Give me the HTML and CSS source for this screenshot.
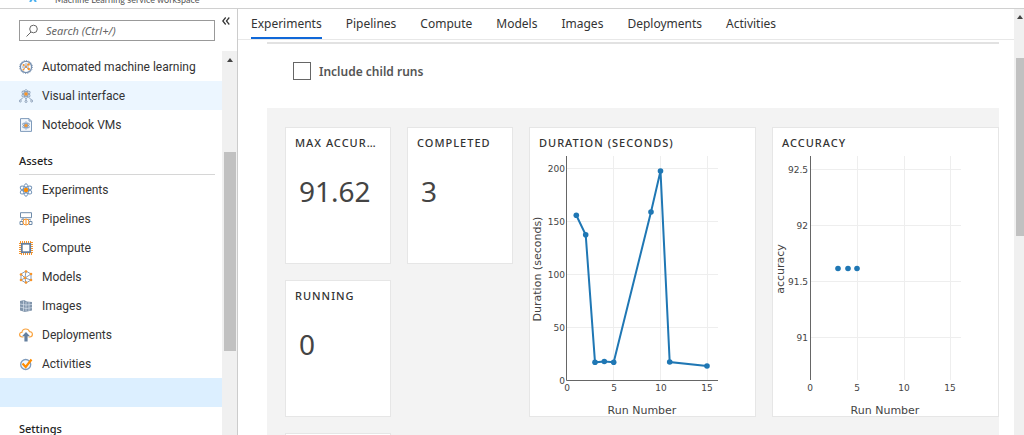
FILE: index.html
```html
<!DOCTYPE html>
<html lang="en">
<head>
<meta charset="utf-8">
<title>Machine Learning service workspace</title>
<link rel="stylesheet" href="styles.css">
</head>
<body>
<div class="app">
  <header class="topbar">
    <svg class="topbar-icon" width="8" height="8" viewBox="0 0 8 8" aria-hidden="true"><path d="M1 8L3 5M5 5L7 8" stroke="#4db2f0" stroke-width="2"/></svg>
    <span>Machine Learning service workspace</span>
  </header>
  <div class="body">
    <aside class="sidebar">
      <div class="sidebar-head">
        <label class="search">
          <svg width="14" height="14" viewBox="0 0 14 14" fill="none" stroke="#666" aria-hidden="true"><circle cx="8.5" cy="5" r="3.8"/><path d="M6 8L1.5 12.5"/></svg>
          <input type="text" placeholder="Search (Ctrl+/)" aria-label="Search">
        </label>
        <button class="collapse" aria-label="Collapse menu"><svg width="8" height="8" viewBox="0 0 8 8" fill="none" stroke="#333" stroke-width="1.2"><path d="M3.7 .5L.8 4l2.9 3.5M7.3 .5L4.4 4l2.9 3.5"/></svg></button>
      </div>
      <div class="sidebar-scroll">
        <nav class="menu">
          <a class="item" href="#"><svg viewBox="0 0 14 14" fill="none" stroke="#7891b0"><circle cx="7" cy="7" r="5.6" stroke-width="1.3"/><circle cx="7" cy="7" r="6.5" stroke-dasharray="1 1.5"/><path d="M3 7h7M4.500 4L10 10M10 3.500L4 10M7 3v3" stroke-width=".8"/><g fill="#f7942a" stroke="none"><circle cx="9.500" cy="4.500" r="1.300"/><circle cx="4.500" cy="5" r="1"/><circle cx="7" cy="7" r="1"/><circle cx="4.500" cy="9.500" r="1"/><circle cx="9.800" cy="9" r="1.200"/></g></svg>Automated machine learning</a>
          <a class="item hover" href="#"><svg viewBox="0 0 14 14" fill="none" stroke="#8ba0ba"><g stroke-width=".9"><ellipse cx="7" cy="5" rx="2" ry="4.500"/><ellipse cx="7" cy="5" rx="2" ry="4.500" transform="rotate(60 7 5)"/><ellipse cx="7" cy="5" rx="2" ry="4.500" transform="rotate(120 7 5)"/></g><path d="M4 8.500L1.500 11M10 8.500l2.500 2.500M7 9v3"/><g fill="#fff"><circle cx="1.300" cy="12" r="1"/><circle cx="7" cy="12.500" r="1"/><circle cx="12.700" cy="12" r="1"/></g><circle cx="7" cy="5" r="1.800" fill="#f7942a" stroke="none"/></svg>Visual interface</a>
          <a class="item" href="#"><svg viewBox="0 0 14 14" fill="none" stroke="#7f9bbb"><path d="M1.500 .6h8.500l2.500 2.500v10.300h-11z" fill="#f3f8fd"/><path d="M10 .6v2.500h2.500"/><g stroke-width=".8"><ellipse cx="7" cy="7.500" rx="1.500" ry="3.800"/><ellipse cx="7" cy="7.500" rx="1.500" ry="3.800" transform="rotate(60 7 7.500)"/><ellipse cx="7" cy="7.500" rx="1.500" ry="3.800" transform="rotate(120 7 7.500)"/></g><circle cx="7" cy="7.500" r="1.600" fill="#f7942a" stroke="none"/></svg>Notebook VMs</a>
          <h2 class="heading">Assets</h2>
          <a class="item" href="#"><svg viewBox="0 0 14 14" fill="none" stroke="#7595b8"><ellipse cx="7" cy="7" rx="2.500" ry="6.300"/><ellipse cx="7" cy="7" rx="2.500" ry="6.300" transform="rotate(60 7 7)"/><ellipse cx="7" cy="7" rx="2.500" ry="6.300" transform="rotate(120 7 7)"/><circle cx="7" cy="7" r="2.200" fill="#ff8c00" stroke="none"/></svg>Experiments</a>
          <a class="item" href="#"><svg viewBox="0 0 14 14" fill="none" stroke="#6f8cab"><path d="M1.500 .7h11v5h-11zM4 6v2M1 9.500h3v3H1zM10 9.500h3v3h-3z"/><path d="M2.500 8.500V7.500h9v1" stroke="#8ba0ba"/><circle cx="7" cy="10" r="3" stroke="#f7942a" fill="#fff"/><path d="M7 7v6" stroke="#f7942a"/></svg>Pipelines</a>
          <a class="item" href="#"><svg viewBox="0 0 14 14" fill="none"><rect x="1" y="1" width="12" height="12" stroke="#f7942a" stroke-width="2" stroke-dasharray="1 1"/><rect x="2.800" y="2.800" width="8.400" height="8.400" fill="#fff" stroke="#647f9e" stroke-width="1.800"/></svg>Compute</a>
          <a class="item" href="#"><svg viewBox="0 0 14 14" fill="none" stroke="#7891b0"><path d="M7 1l5 3v6l-5 3-5-3V4zM2 4l4 4 6-4M6 8l1 5M6 8l6 2M7 1L6 8l-4 2" stroke-width=".9"/><g fill="#f7942a" stroke="none"><circle cx="7" cy="1.500" r="1.300"/><circle cx="12" cy="4" r="1.300"/><circle cx="12" cy="10" r="1.300"/><circle cx="7" cy="12.500" r="1.300"/><circle cx="2" cy="10" r="1.300"/><circle cx="2" cy="4.500" r="1.300"/><circle cx="6" cy="7.800" r="1.400"/></g></svg>Models</a>
          <a class="item" href="#"><svg viewBox="0 0 14 14"><path d="M1 2l4-1 3 1.500 5 .5v8.500L6 13l-5-1.500z" fill="#8296ac"/><path d="M1 5l6 1 6-.5M1 8l6 1.500 6-.8M4.500 1.500v10.500M7 3v9.500M10 3v9" stroke="#d7e1ec" stroke-width=".7" fill="none"/></svg>Images</a>
          <a class="item" href="#"><svg viewBox="0 0 14 14"><path d="M4.500 9H3.200C1.500 9 .6 8 .6 6.600S1.700 4.300 2.900 4.300C3.200 2.300 4.800 1 6.800 1c1.900 0 3.200 1 3.700 2.700 1.800-.1 2.900 1 2.900 2.600S12.300 9 10.800 9H9.500" fill="none" stroke="#f9a33f" stroke-width="1.200"/><path d="M7 4l4 4.200H8.600V13.500H5.400V8.200H3z" fill="#647f9e"/></svg>Deployments</a>
          <a class="item" href="#"><svg viewBox="0 0 14 14" fill="none"><circle cx="6.700" cy="7.500" r="5" fill="#f2f7fc" stroke="#7f9bbb" stroke-width="1.300"/><path d="M3.500 6.500l3.200 3.500L12.500 2.500" stroke="#ff8c00" stroke-width="2.200"/></svg>Activities</a>
          <a class="item selected" href="#" aria-label="Selected item"></a>
          <h2 class="heading">Settings</h2>
        </nav>
        <div class="scrollbar side-bar" aria-hidden="true"><i class="arrow"></i><i class="thumb"></i></div>
      </div>
    </aside>
    <main class="main">
      <div class="content">
        <nav class="tabs">
          <a class="tab active" href="#">Experiments</a>
          <a class="tab" href="#">Pipelines</a>
          <a class="tab" href="#">Compute</a>
          <a class="tab" href="#">Models</a>
          <a class="tab" href="#">Images</a>
          <a class="tab" href="#">Deployments</a>
          <a class="tab" href="#">Activities</a>
        </nav>
        <div class="pane">
          <label class="check"><input type="checkbox">Include child runs</label>
          <section class="board">
            <article class="card"><h3>MAX ACCURACY</h3><p>91.62</p></article>
            <article class="card"><h3>COMPLETED</h3><p>3</p></article>
            <article class="card chart">
              <h3>DURATION (SECONDS)</h3>
              <svg viewBox="0 0 225 260" preserveAspectRatio="xMinYMin meet" role="img" aria-label="Duration by run number">
                <path class="grid" d="M83.500 0V224M130.500 0V224M177.500 0V224M37 171.500H188M37 118.500H188M37 65.500H188M37 12.500H188"/>
                <path class="axis" d="M36.500 0V224.500H188"/>
                <polyline class="line" points="46.300,59.300 55.700,78.700 65,206.300 74.300,205.500 83.700,206.300 121,56 130.500,15 139.700,206 177,210"/>
                <g class="dots"><circle cx="46.300" cy="59.300" r="2.800"/><circle cx="55.700" cy="78.700" r="2.800"/><circle cx="65" cy="206.300" r="2.800"/><circle cx="74.300" cy="205.500" r="2.800"/><circle cx="83.700" cy="206.300" r="2.800"/><circle cx="121" cy="56" r="2.800"/><circle cx="130.500" cy="15" r="2.800"/><circle cx="139.700" cy="206" r="2.800"/><circle cx="177" cy="210" r="2.800"/></g>
                <g class="ticks end"><text x="35" y="16">200</text><text x="35" y="69">150</text><text x="35" y="122">100</text><text x="35" y="175">50</text><text x="35" y="228">0</text></g>
                <g class="ticks"><text x="37" y="235">0</text><text x="84" y="235">5</text><text x="131" y="235">10</text><text x="177" y="235">15</text></g>
                <text class="title" x="112" y="258">Run Number</text>
                <text class="title" transform="translate(11 113) rotate(-90)">Duration (seconds)</text>
              </svg>
            </article>
            <article class="card chart">
              <h3>ACCURACY</h3>
              <svg viewBox="0 0 225 260" preserveAspectRatio="xMinYMin meet" role="img" aria-label="Accuracy by run number">
                <path class="grid" d="M84.500 0V224M131.500 0V224M177.500 0V224M37 13.500H188M37 69.500H188M37 125.500H188M37 181.500H188"/>
                <path class="axis" d="M37.500 0V224"/>
                <g class="dots"><circle cx="65" cy="112.500" r="2.800"/><circle cx="75" cy="112.500" r="2.800"/><circle cx="84" cy="112.500" r="2.800"/></g>
                <g class="ticks end"><text x="35" y="17">92.5</text><text x="35" y="73">92</text><text x="35" y="129">91.5</text><text x="35" y="185">91</text></g>
                <g class="ticks"><text x="37" y="235">0</text><text x="84" y="235">5</text><text x="131" y="235">10</text><text x="177" y="235">15</text></g>
                <text class="title" x="112" y="258">Run Number</text>
                <text class="title" transform="translate(11 113) rotate(-90)">accuracy</text>
              </svg>
            </article>
            <article class="card"><h3>RUNNING</h3><p>0</p></article>
            <article class="card third"></article>
          </section>
        </div>
      </div>
      <div class="scrollbar main-bar" aria-hidden="true"><i class="arrow"></i><i class="thumb"></i></div>
    </main>
  </div>
</div>
</body>
</html>
```

FILE: styles.css
```css
* { box-sizing: border-box; }

body {
  margin: 0;
  font-family: "Noto Sans", "Open Sans", sans-serif;
  font-size: 12px;
  color: #333;
  background: #fff;
}

a { color: inherit; text-decoration: none; }

.app {
  display: flex;
  flex-direction: column;
  height: 100vh;
  overflow: hidden;
}

/* Top bar, scrolled almost out of view */
.topbar {
  display: flex;
  align-items: flex-end;
  gap: 18px;
  flex: none;
  height: 9px;
  padding-left: 29px;
  overflow: hidden;
  border-bottom: 1px solid #d0d0d0;
  font-family: Lato, sans-serif;
  font-size: 9px;
  line-height: 14px;
  color: #555;
}
.topbar-icon { margin-bottom: 6px; }
.topbar span { padding-bottom: 1px; }

.body { display: flex; flex: 1; min-height: 0; }

/* Sidebar */
.sidebar {
  display: flex;
  flex-direction: column;
  flex: none;
  width: 238px;
  border-right: 1px solid #ccc;
}
.sidebar-head {
  display: flex;
  align-items: flex-start;
  gap: 7px;
  flex: none;
  height: 42px;
  padding: 11px 7px 0 19px;
}
.search {
  display: flex;
  align-items: center;
  gap: 7px;
  flex: 1;
  height: 21px;
  padding-left: 5px;
  border: 1px solid #999;
}
.search svg { flex: none; }
.search input {
  flex: 1;
  min-width: 0;
  padding: 0;
  border: 0;
  outline: 0;
  background: none;
  font: italic 11px "Noto Sans", "Open Sans", sans-serif;
}
.search input::placeholder { color: #666; opacity: 1; }
.collapse {
  display: flex;
  margin-top: -3px;
  padding: 0;
  border: 0;
  background: none;
}

.sidebar-scroll { display: flex; flex: 1; min-height: 0; }
.menu { flex: 1; padding-top: 1px; overflow: hidden; }
.item {
  display: flex;
  align-items: center;
  gap: 9px;
  height: 29px;
  padding-left: 19px;
  font-family: Roboto, sans-serif;
  font-size: 12px;
}
.item svg { flex: none; width: 14px; height: 14px; }
.item.hover { background: #ecf6ff; }
.item.selected { background: #dcefff; }
.heading {
  height: 30px;
  margin: 6px 7px 0 19px;
  padding-top: 8px;
  border-bottom: 1px solid #d6d6d6;
  font-size: 11px;
  line-height: 16px;
  font-weight: 500;
  color: #222;
}

/* Scrollbars */
.scrollbar {
  display: flex;
  flex-direction: column;
  align-items: center;
  flex: none;
  background: #f0f0f0;
}
.side-bar { width: 15px; padding: 7px 1px 0; }
.arrow {
  flex: none;
  border: 3px solid transparent;
  border-top: 0;
  border-bottom: 4px solid #444;
}
.thumb { flex: none; width: 100%; background: #c1c1c1; }
.side-bar .thumb { height: 199px; margin-top: 90px; width: 12px; }
.main-bar { width: 10px; padding: 6px 0 0 2px; }
.main-bar .thumb { height: 178px; margin-top: 39px; }

/* Main area */
.main { display: flex; flex: 1; min-width: 0; }
.content { flex: 1; min-width: 0; overflow: hidden; }
.tabs {
  display: flex;
  gap: 24px;
  height: 31px;
  padding-left: 13px;
  border-bottom: 1px solid #e8e8e8;
}
.tab { height: 30px; line-height: 30px; }
.tab.active { border-bottom: 2px solid #1068d8; }

.pane {
  margin: 2px 15px 0 29px;
  border-top: 2px solid #e2e2e2;
}
.check {
  display: flex;
  align-items: center;
  gap: 8px;
  height: 18px;
  margin: 18px 0 28px 26px;
  font-size: 12px;
  font-weight: 600;
  color: #555;
}
.check input {
  appearance: none;
  width: 18px;
  height: 18px;
  margin: 0;
  border: 1px solid #666;
  background: #fff;
}

.board {
  display: grid;
  grid-template-columns: 106px 106px 1fr 1fr;
  grid-auto-rows: 137px;
  gap: 16px;
  padding: 19px 0 0 18px;
  background: #f3f3f3;
}
.card {
  min-width: 0;
  border: 1px solid #e6e6e6;
  background: #fff;
}
.card.chart { grid-row: span 2; }
.card.third { grid-column: 1; }
.card h3 {
  margin: 0;
  padding: 7px 9px 0;
  overflow: hidden;
  font-size: 11px;
  line-height: 16px;
  font-weight: 500;
  letter-spacing: 1px;
  white-space: nowrap;
  text-overflow: ellipsis;
}
.card p {
  margin: 20px 0 0 13px;
  font-size: 28px;
  line-height: 40px;
  font-weight: 400;
  color: #444;
}

/* Charts */
.chart svg { display: block; width: 100%; height: 260px; margin-top: 5px; }
.grid { fill: none; stroke: #eee; }
.axis { fill: none; stroke: #666; }
.line { fill: none; stroke: #1f77b4; stroke-width: 2; }
.dots { fill: #1f77b4; }
.ticks, .title {
  font-family: "DejaVu Sans", sans-serif;
  text-anchor: middle;
  fill: #444;
}
.ticks { font-size: 9px; }
.ticks.end { text-anchor: end; }
.title { font-size: 11px; }
```
